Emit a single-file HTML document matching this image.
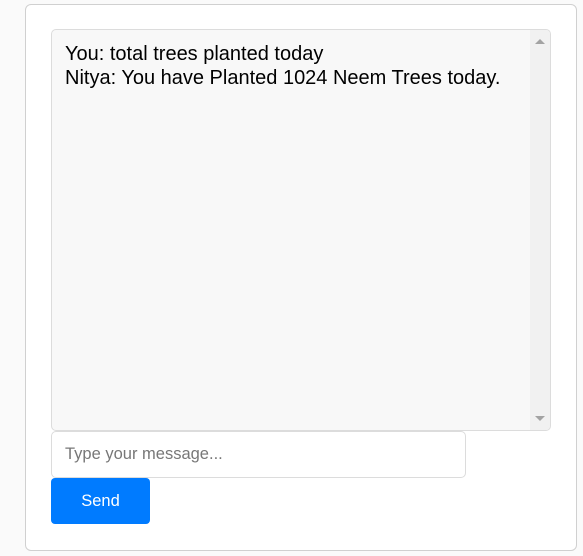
<!DOCTYPE html>
<html><head><style>
html,body{margin:0;padding:0;background:#fafafa;width:583px;height:556px;overflow:hidden;font-family:"Liberation Sans",Arial,sans-serif;}
.card{position:absolute;left:25px;top:4px;width:550px;height:545px;background:#fff;border:1px solid #d0d0d0;border-radius:6px;}
.chat{position:absolute;left:51px;top:29px;width:498px;height:400px;background:#f8f8f8;border:1px solid #dcdcdc;border-radius:5px;overflow:hidden;}
.txt{position:absolute;left:13px;top:12px;font-size:20px;line-height:24px;color:#000;white-space:nowrap;}
.sb{position:absolute;right:0;top:0;width:20px;height:100%;background:#f1f1f1;}
.up{position:absolute;left:5px;top:9px;width:0;height:0;border-left:5px solid transparent;border-right:5px solid transparent;border-bottom:5px solid #a3a3a3;}
.dn{position:absolute;left:5px;bottom:9px;width:0;height:0;border-left:5px solid transparent;border-right:5px solid transparent;border-top:5px solid #a3a3a3;}
.inp{position:absolute;left:51px;top:431px;width:413px;height:45px;border:1px solid #dcdcdc;border-radius:5px;background:#fff;}
.inp span{position:absolute;left:13px;top:13px;font-size:16.5px;color:#777;}
.btn{position:absolute;left:51px;top:478px;width:99px;height:46px;background:#007bff;border-radius:4px;color:#fff;font-size:16.5px;text-align:center;line-height:46px;}
</style></head><body>
<div class="card"></div>
<div class="chat"><div class="txt">You: total trees planted today<br>Nitya: You have Planted 1024 Neem Trees today.</div><div class="sb"><div class="up"></div><div class="dn"></div></div></div>
<div class="inp"><span>Type your message...</span></div>
<div class="btn">Send</div>
</body></html>
